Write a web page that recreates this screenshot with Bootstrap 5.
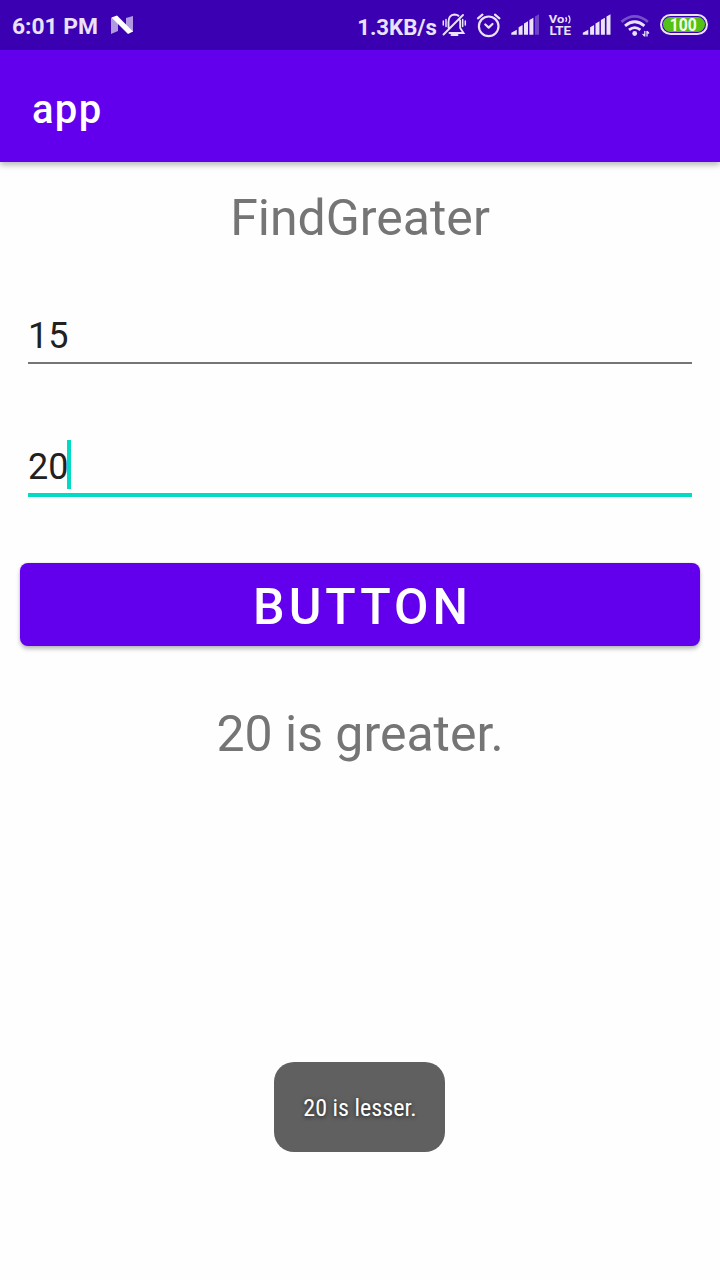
<!DOCTYPE html>
<html lang="en">
<head>
<meta charset="utf-8">
<meta name="viewport" content="width=device-width, initial-scale=1">
<title>app</title>
<link href="https://cdn.jsdelivr.net/npm/bootstrap@5.3.0/dist/css/bootstrap.min.css" rel="stylesheet">
<style>
body{font-family:Roboto,"Liberation Sans",sans-serif;background:#fefefe;color:#212121;height:1280px;overflow:hidden}
.status{height:50px;background:#3a00b2;color:#e9e2f8;font-size:22.800px;font-weight:700;line-height:54px;padding-left:12px;white-space:nowrap}
.status svg{display:block;flex:none}
.rate{font-size:22.200px;margin-right:1px}
.appbar{height:112px;background:#6200ee;color:#fff;padding:8px 32px 0;font-size:40px;font-weight:500;letter-spacing:1.3px;box-shadow:0 3px 6px rgba(0,0,0,.28)}
.display-line{color:#757575;font-size:50px;line-height:60px}
.heading{margin-top:26px}
.field{margin:0 28px;font-size:36px;line-height:48px;border-bottom:2px solid #757575}
.field-one{margin-top:64px;height:52px}
.field-two{margin-top:76px;height:57px;border-bottom:4px solid #03dac5}
.field-two span:first-child{padding-top:3px}
.caret{width:4px;height:49px;background:#03dac5;margin-left:-1px}
.btn-main{margin:66px 20px 0;height:83px;border:0;border-radius:8px;background:#6200ee;color:#fff;font-size:50px;font-weight:500;letter-spacing:4px;line-height:60px;padding:4px 0 0 5px;box-shadow:0 3px 4px rgba(0,0,0,.26),0 0 2px rgba(0,0,0,.14)}
.result{margin-top:58px}
.snack{margin:298px auto 0;position:relative;left:-.5px;width:171px;height:90px;border-radius:20px;background:#606060;color:#fff;font-size:24px;text-shadow:0 1px 4px rgba(0,0,0,.7);padding:2px 0 0 1px}
.snack span{font-family:"Roboto Condensed",Roboto,sans-serif;font-stretch:75%;white-space:nowrap}
</style>
</head>
<body class="d-flex flex-column">
<header class="status d-flex">
  <span>6:01 PM</span>
  <svg class="ms-2" width="32" height="50" viewBox="106 0 32 50" fill="#fff"><path opacity=".6" d="M111 18l7-2v15l-7 3zM126 18l7-2v16l-7-2z"/><path d="M111.5 17.5l5.5-2L133 31.5 128 34z"/></svg>
  <span class="ms-auto rate">1.3KB/s</span>
  <svg width="32" height="50" viewBox="438 0 32 50" fill="none" stroke="#e9e2f8" stroke-width="1.9" stroke-linecap="round"><path d="M443.500 34.500L463 15M448.500 27.500V22Q448.500 15 454.500 14.500Q457 14.500 458.500 15.800M460.200 20.500V28L463.500 33H449.500"/><path d="M451.500 35H457.500" stroke-width="2"/><path d="M443.300 21v4M446 19.500v7M462.700 19.500v7M465.300 21v4" stroke-width="1.500"/></svg>
  <svg width="35" height="50" viewBox="470 0 35 50" fill="none" stroke="#e9e2f8" stroke-width="2.200" stroke-linecap="round" stroke-linejoin="round"><circle cx="488.700" cy="26.300" r="9.800"/><path d="M485.300 24.500l3.400 3.100 3.800-3.600M478 18.300l4.400-3.700M495 14.600l4.400 3.700"/></svg>
  <svg width="38" height="50" viewBox="505 0 38 50" fill="#e9e2f8"><path d="M511.300 34.700v-2l5.500-3v5zM518.600 34.700v-7.500l4-2.200v9.700zM524 34.700V23.500l4-2.200v13.400zM529.400 34.700V20l4-2.200v16.900z"/><path opacity=".3" d="M535 34.700V16.500l4-2.200v20.400z"/></svg>
  <svg width="34" height="50" viewBox="543 0 34 50" fill="#e9e2f8" font-family="Roboto,sans-serif" font-weight="700"><text x="548.800" y="23.300" font-size="11.500" textLength="15.500" lengthAdjust="spacingAndGlyphs">Vo</text><text x="549.500" y="35" font-size="12" textLength="21.500" lengthAdjust="spacingAndGlyphs">LTE</text><path d="M565.600 17.200q2 2.300 0 4.700M568.500 15.500q3 4 0 7.900" fill="none" stroke="#e9e2f8" stroke-width="1.300"/></svg>
  <svg width="38" height="50" viewBox="505.500 0 38 50" fill="#e9e2f8"><path d="M511.300 34.700v-2l5.500-3v5zM518.600 34.700v-7.500l4-2.200v9.700zM524 34.700V23.500l4-2.200v13.400zM529.400 34.700V20l4-2.200v16.900zM535 34.700V16.500l4-2.200v20.400z"/></svg>
  <svg width="40" height="50" viewBox="615 0 40 50" fill="none" stroke="#e9e2f8" stroke-width="2.800"><path opacity=".35" d="M621.500 21.800q13.200-10.800 26.400 0"/><path d="M625 25.800q9.700-8 19.400 0M629 29.800q5.700-4.400 11.400 0"/><circle cx="634.700" cy="33.500" r="2.400" fill="#e9e2f8" stroke="none"/><path d="M644.800 31v5.500M644.800 36.200l-2.200-2.300M647 36.500V31M647 31.200l2 2.300" stroke-width="1.300"/></svg>
  <svg width="65" height="50" viewBox="655 0 65 50"><rect x="661" y="15" width="46" height="19" rx="9.500" fill="none" stroke="#e9e2f8" stroke-width="2"/><rect x="663" y="17" width="42" height="15" rx="7.500" fill="#52c214"/><text x="683.200" y="30.800" text-anchor="middle" font-family="Roboto,sans-serif" font-weight="700" font-size="17.500" textLength="27" lengthAdjust="spacingAndGlyphs" fill="#f4fff0">100</text></svg>
</header>
<nav class="appbar d-flex align-items-center">app</nav>
<main class="d-flex flex-column">
  <div class="display-line heading text-center">FindGreater</div>
  <div class="field field-one">15</div>
  <div class="field field-two d-flex"><span>20</span><span class="caret"></span></div>
  <button type="button" class="btn btn-main">BUTTON</button>
  <div class="display-line result text-center">20 is greater.</div>
  <div class="snack d-flex align-items-center justify-content-center"><span>20 is lesser.</span></div>
</main>
<script src="https://cdn.jsdelivr.net/npm/bootstrap@5.3.0/dist/js/bootstrap.bundle.min.js"></script>
</body>
</html>
